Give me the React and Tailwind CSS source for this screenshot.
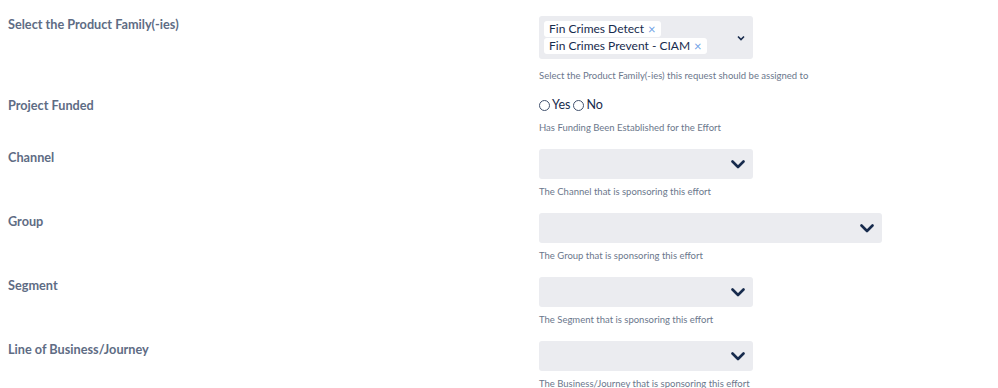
const font = { fontFamily: "Lato, 'Open Sans', sans-serif" };

function Chevron({ small }) {
  if (small) {
    return (
      <svg width="8" height="6" viewBox="0 0 8 6" className="text-[#172b4d]">
        <path d="M1 1.5 L4 4.5 L7 1.5" fill="none" stroke="currentColor" strokeWidth="1.6" />
      </svg>
    );
  }
  return (
    <svg width="14" height="9" viewBox="0 0 14 9" className="text-[#172b4d]">
      <path d="M1.5 1.5 L7 7 L12.5 1.5" fill="none" stroke="currentColor" strokeWidth="2.6" strokeLinecap="round" strokeLinejoin="round" />
    </svg>
  );
}

function Tag({ children }) {
  return (
    <span className="inline-flex h-4 items-center gap-[4px] rounded-[3px] bg-white px-[5px] text-[12px] leading-4 text-[#172b4d]">
      {children}
      <span className="text-[13px] leading-none text-[#6f9fe6]">×</span>
    </span>
  );
}

function Help({ children, className = "" }) {
  return <div className={`text-[9.5px] leading-[14px] text-[#6b778c] ${className}`}>{children}</div>;
}

function SelectBox({ wide }) {
  return (
    <div className={`flex h-[30px] items-center justify-end rounded-[3px] bg-[#ebecf0] pr-[8px] ${wide ? "w-[343px]" : "w-[214px]"}`}>
      <Chevron />
    </div>
  );
}

function Row({ label, children }) {
  return (
    <div className="flex">
      <div className="w-[539px] pl-2 text-[12.7px] font-bold leading-4 text-[#5e6c84]">{label}</div>
      <div>{children}</div>
    </div>
  );
}

function Radio({ label }) {
  return (
    <span className="inline-flex items-center">
      <span className="mr-[2px] inline-block h-[11px] w-[11px] rounded-full border border-[#42526e]" />
      <span className="mr-[3px]">{label}</span>
    </span>
  );
}

export default function App() {
  return (
    <div className="min-h-[388px] bg-white pt-4" style={font}>
      <Row label="Select the Product Family(-ies)">
        <div className="flex h-[43px] w-[214px] items-center justify-between rounded-[3px] bg-[#ebecf0] pl-[5px] pr-[8px]">
          <div className="flex flex-col items-start gap-[1px]">
            <Tag>Fin Crimes Detect</Tag>
            <Tag>Fin Crimes Prevent - CIAM</Tag>
          </div>
          <Chevron small />
        </div>
        <Help className="mt-[10px] mb-[14px]">Select the Product Family(-ies) this request should be assigned to</Help>
      </Row>
      <Row label="Project Funded">
        <div className="flex h-[17px] items-center text-[12.5px] text-[#172b4d]">
          <Radio label="Yes" />
          <Radio label="No" />
        </div>
        <Help className="mt-[7px] mb-[14px]">Has Funding Been Established for the Effort</Help>
      </Row>
      <Row label="Channel">
        <SelectBox />
        <Help className="mt-[6px] mb-[14px]">The Channel that is sponsoring this effort</Help>
      </Row>
      <Row label="Group">
        <SelectBox wide />
        <Help className="mt-[6px] mb-[14px]">The Group that is sponsoring this effort</Help>
      </Row>
      <Row label="Segment">
        <SelectBox />
        <Help className="mt-[6px] mb-[14px]">The Segment that is sponsoring this effort</Help>
      </Row>
      <Row label="Line of Business/Journey">
        <SelectBox />
        <Help className="mt-[6px]">The Business/Journey that is sponsoring this effort</Help>
      </Row>
    </div>
  );
}
